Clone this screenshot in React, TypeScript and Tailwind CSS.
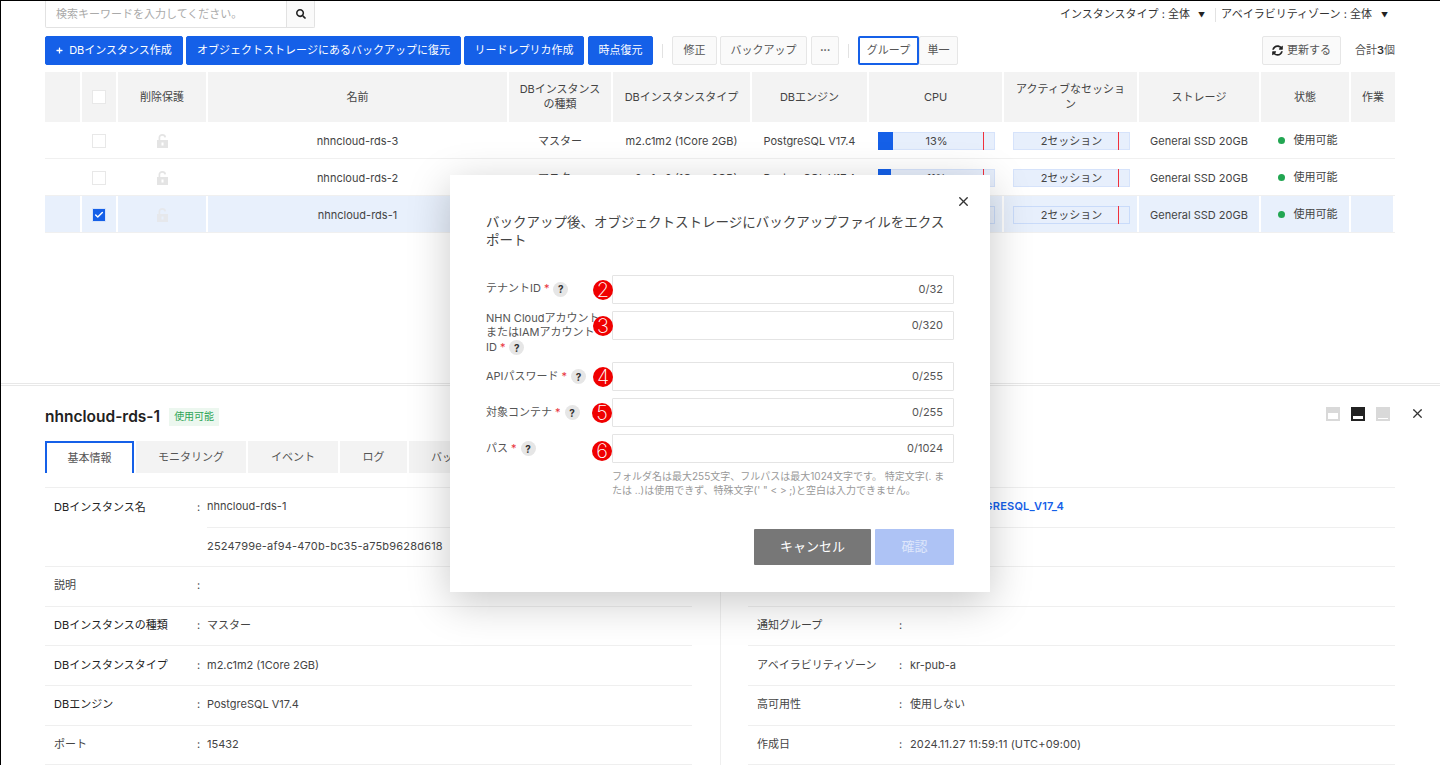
import React from 'react';
import { FaPlus, FaSearch, FaSyncAlt } from 'react-icons/fa';
import { X, Check } from 'lucide-react';

const columns = ['w-[37px]', 'w-[36px]', 'w-[90px]', 'w-[301px]', 'w-[104px]', 'w-[139px]', 'w-[117px]', 'w-[135px]', 'w-[135px]', 'w-[122px]', 'w-[90px]', 'w-[44px]'];

const headers = ['', '', '削除保護', '名前', 'DBインスタンスの種類', 'DBインスタンスタイプ', 'DBエンジン', 'CPU', 'アクティブなセッション', 'ストレージ', '状態', '作業'];

const rows = [
  { name: 'nhncloud-rds-3', cpu: 13, selected: false },
  { name: 'nhncloud-rds-2', cpu: 11, selected: false },
  { name: 'nhncloud-rds-1', cpu: 9, selected: true },
];

const LockIcon = ({ light }: { light: boolean }) => (
  <svg width="11" height="14" viewBox="0 0 11 14" className={light ? 'text-[#e6e8ec]' : 'text-[#e4e4e4]'}>
    <path d="M2.4 6.5V3.4C2.4 1.8 3.6.9 5.2.9s2.9.9 3 2.5" fill="none" stroke="currentColor" strokeWidth="1.7" />
    <path d="M0 6h11v8H0z" fill="currentColor" />
    <rect x="4.5" y="8.5" width="2" height="3" fill={light ? '#e8f0fc' : '#fff'} />
  </svg>
);

const Checkbox = ({ checked }: { checked: boolean }) =>
  checked ? (
    <span className="flex h-[14px] w-[14px] items-center justify-center border border-[#d5e3fa] bg-[#1560e8] text-white">
      <Check size={10} strokeWidth={3.5} />
    </span>
  ) : (
    <span className="block h-[14px] w-[14px] border-[1.5px] border-[#e8e8e8] bg-white" />
  );

const Meter = ({ label, percent, selected }: { label: string; percent: number; selected: boolean }) => (
  <div className={`relative h-[18px] w-[117px] translate-x-px border bg-[#e7effc] text-center text-[11px] leading-[16px] text-[#444] ${selected ? 'border-[#c9dbfa]' : 'border-[#d6e3fb]'}`}>
    {percent > 0 && <div className="absolute -left-px -top-px h-[18px] bg-[#1560e8]" style={{ width: `${percent}%` }} />}
    <span className="relative">{label}</span>
    <div className="absolute -top-px left-[104px] h-[18px] w-px bg-[#f0313c]" />
  </div>
);

const Row = ({ name, cpu, selected }: { name: string; cpu: number; selected: boolean }) => {
  const cell = 'flex items-center justify-center border-r-2 border-transparent';
  const values = [
    <Checkbox checked={selected} />,
    <LockIcon light={selected} />,
    name,
    'マスター',
    'm2.c1m2 (1Core 2GB)',
    'PostgreSQL V17.4',
    <Meter label={`${cpu}%`} percent={cpu} selected={selected} />,
    <Meter label="2セッション" percent={0} selected={selected} />,
    'General SSD 20GB',
    <span className="ml-[5px] flex -translate-y-px items-center">
      <span className="mr-[9px] h-[7px] w-[7px] rounded-full bg-[#22a652]" />
      使用可能
    </span>,
    '',
  ];
  return (
    <div className={`flex h-[37px] border-b border-[#f0f0f0] text-[11px] text-[#444] ${selected ? 'bg-[#e8f0fc]' : ''}`}>
      <div className={`${columns[0]} ${selected ? 'border-r-2 border-white' : ''}`} />
      {values.map((v, i) => (
        <div key={i} className={`${columns[i + 1]} ${cell} pt-[2px] ${selected ? 'border-white' : ''}`}>
          {v}
        </div>
      ))}
    </div>
  );
};

const ToolButton = ({ children, primary, className = '' }: { children: React.ReactNode; primary?: boolean; className?: string }) => (
  <button
    className={`flex h-[29px] items-center justify-center rounded-[2px] border text-[11px] ${primary ? 'border-[#1560e8] bg-[#1560e8] text-white' : 'border-[#e6e6e6] bg-[#fafafa] text-[#555]'} ${className}`}
  >
    {children}
  </button>
);

const TopSection = () => (
  <div className="h-[382px] pl-[44px] pr-[45px]">
    <div className="flex h-[27px] items-start justify-between">
      <div className="flex h-[27px] w-[270px] rounded-b-[2px] border border-t-0 border-[#e2e2e2] bg-white">
        <div className="flex flex-1 items-center pl-[10px] text-[11px] text-[#aaa]">検索キーワードを入力してください。</div>
        <div className="flex w-[28px] items-center justify-center border-l border-[#e2e2e2] bg-[#fafafa] text-[#222]">
          <FaSearch size={10} />
        </div>
      </div>
      <div className="flex h-[27px] items-center text-[11px] text-[#333]">
        <span>インスタンスタイプ : 全体</span>
        <span className="ml-[8px] translate-y-[2px] text-[7px] text-[#222]">▼</span>
        <span className="ml-[10px] mr-[5px] h-[14px] w-px bg-[#e2e2e2]" />
        <span>アベイラビリティゾーン : 全体</span>
        <span className="ml-[9px] mr-[7px] translate-y-[2px] text-[7px] text-[#222]">▼</span>
      </div>
    </div>
    <div className="mt-[8px] flex h-[29px] items-center">
      <ToolButton primary className="w-[138px]">
        <FaPlus size={7} className="mr-[6px]" />
        DBインスタンス作成
      </ToolButton>
      <ToolButton primary className="ml-[3px] w-[275px]">オブジェクトストレージにあるバックアップに復元</ToolButton>
      <ToolButton primary className="ml-[3px] w-[120px]">リードレプリカ作成</ToolButton>
      <ToolButton primary className="ml-[4px] w-[65px]">時点復元</ToolButton>
      <span className="mx-[9px] h-[14px] w-px bg-[#e2e2e2]" />
      <ToolButton className="w-[45px]">修正</ToolButton>
      <ToolButton className="ml-[3px] w-[87px]">バックアップ</ToolButton>
      <ToolButton className="ml-[4px] w-[28px] font-bold tracking-tight">···</ToolButton>
      <span className="mx-[9px] h-[14px] w-px bg-[#e2e2e2]" />
      <ToolButton className="w-[61px] !border-2 !border-[#1560e8] !bg-white">グループ</ToolButton>
      <ToolButton className="w-[39px]">単一</ToolButton>
      <div className="ml-auto flex items-center">
        <ToolButton className="w-[79px]">
          <FaSyncAlt size={11} className="mr-[4px] text-[#222]" />
          更新する
        </ToolButton>
        <span className="ml-[14px] text-[11px] text-[#555]">
          合計<b className="font-semibold text-[#333]">3</b>個
        </span>
      </div>
    </div>
    <div className="mt-[7px] flex h-[50px] bg-[#f3f3f3] text-center text-[11px] leading-[15px] text-[#444]">
      {headers.map((h, i) => (
        <div key={i} className={`${columns[i]} flex items-center justify-center border-r-2 border-white px-[9px] last:border-r-0`}>
          {i === 1 ? <Checkbox checked={false} /> : h}
        </div>
      ))}
    </div>
    {rows.map((r) => (
      <Row key={r.name} {...r} />
    ))}
  </div>
);

const DetailRow = ({ label, value, strong, link, right, wide }: { label: string; value?: string; strong?: boolean; link?: boolean; right?: boolean; wide?: boolean }) => (
  <div className="flex h-[39.6px] items-center border-b border-[#efefef] pb-[1.5px] text-[11px] text-[#444]">
    <div className={`${right ? 'w-[151px]' : 'w-[152px]'} pl-[9px] ${strong ? 'text-[#222]' : 'text-[#444]'}`}>{label}</div>
    <div className={right ? 'w-[11px]' : 'w-[10px]'}>:</div>
    <div className={`${link ? 'font-semibold tracking-[0.2px] text-[#1560e8]' : ''} ${wide ? 'tracking-[0.13px]' : ''}`}>{value}</div>
  </div>
);

const tabs = [
  { label: '基本情報', w: 'w-[89px]' },
  { label: 'モニタリング', w: 'w-[110px]' },
  { label: 'イベント', w: 'w-[90px]' },
  { label: 'ログ', w: 'w-[67px]' },
  { label: 'バックアップ', w: 'w-[110px]' },
];

const DetailPanel = () => (
  <div className="border-t border-[#e8e8e8]">
    <div className="mt-px border-t border-[#e8e8e8] pl-[44px] pr-[45px]">
      <div className="flex h-[55px] items-center justify-between pt-[6px]">
        <div className="flex items-center">
          <span className="text-[15.5px] font-semibold text-[#222]">nhncloud-rds-1</span>
          <span className="ml-[9px] bg-[#ecf7ef] px-[5px] py-[1.5px] text-[10px] text-[#2fa557]">使用可能</span>
        </div>
        <div className="-mr-[30px] flex -translate-y-[3px] items-center">
          <span className="flex h-[14px] w-[14px] items-end bg-[#d9d9d9] p-[2px]">
            <span className="block h-[6px] w-full bg-white" />
          </span>
          <span className="ml-[11px] flex h-[14px] w-[14px] items-end bg-[#222] p-[2px]">
            <span className="block h-[3px] w-full bg-white" />
          </span>
          <span className="ml-[11px] flex h-[14px] w-[14px] items-end bg-[#d9d9d9] p-[2px]">
            <span className="block h-px w-full bg-white" />
          </span>
          <X size={15} strokeWidth={2} className="ml-[20px] text-[#333]" />
        </div>
      </div>
      <div className="flex h-[32px] gap-[2px] text-[11px] text-[#555]">
        {tabs.map((t, i) => (
          <div
            key={t.label}
            className={`flex items-center justify-center ${t.w} ${i === 0 ? 'border-x-2 border-t-2 border-[#1560e8] bg-white' : 'bg-[#f3f3f3]'}`}
          >
            {t.label}
          </div>
        ))}
      </div>
      <div className="mt-[14px] flex">
        <div className="w-[647px] border-t border-[#efefef]">
          <div className="flex h-[79.2px] border-b border-[#efefef] text-[11px] text-[#444]">
            <div className="flex h-[39.6px] w-[152px] items-center pb-[1.5px] pl-[9px] text-[#222]">DBインスタンス名</div>
            <div className="flex h-[39.6px] w-[10px] items-center pb-[1.5px]">:</div>
            <div className="flex-1">
              <div className="flex h-[39.6px] items-center border-b border-[#efefef] pb-[1.5px]">nhncloud-rds-1</div>
              <div className="flex h-[39.6px] items-center pb-[1.5px] tracking-[0.2px]">2524799e-af94-470b-bc35-a75b9628d618</div>
            </div>
          </div>
          <DetailRow label="説明" />
          <DetailRow label="DBインスタンスの種類" value="マスター" strong />
          <DetailRow label="DBインスタンスタイプ" value="m2.c1m2 (1Core 2GB)" strong />
          <DetailRow label="DBエンジン" value="PostgreSQL V17.4" strong />
          <DetailRow label="ポート" value="15432" />
        </div>
        <div className="ml-[28px] mr-[27px] w-px bg-[#efefef]" />
        <div className="w-[647px] border-t border-[#efefef]">
          <DetailRow right label="パラメータグループ" value="default-POSTGRESQL_V17_4" link />
          <DetailRow right label="DBセキュリティグループ" />
          <DetailRow right label="バックアップ" />
          <DetailRow right label="通知グループ" />
          <DetailRow right label="アベイラビリティゾーン" value="kr-pub-a" />
          <DetailRow right label="高可用性" value="使用しない" />
          <DetailRow right label="作成日" value="2024.11.27 11:59:11 (UTC+09:00)" wide />
        </div>
      </div>
    </div>
  </div>
);

const Help = () => (
  <span className="ml-[4px] inline-flex h-[15px] w-[15px] items-center justify-center rounded-full bg-[#e6e6e6] align-middle text-[10px] font-bold leading-none text-[#333]">?</span>
);

const Required = () => <span className="ml-[3px] text-[#e8323c]">*</span>;

const Field = ({ n, count, top, badge = 'left-[107px] top-[5px]', children }: { n: number; count: string; top?: boolean; badge?: string; children: React.ReactNode }) => (
  <div className={`relative flex ${top ? 'items-start' : 'items-center'}`}>
    <div className="w-[126px] text-[11px] leading-[14.5px] text-[#555]">{children}</div>
    <div className="flex h-[29px] w-[342px] items-center justify-end rounded-[1px] border border-[#e4e4e4] bg-white pr-[10px] text-[11px] text-[#555]">{count}</div>
    <span className={`absolute ${badge} flex h-[20px] w-[20px] items-center justify-center rounded-full bg-[#f00000] font-['Inter',sans-serif] text-[20px] font-extralight leading-none text-white`}>{n}</span>
  </div>
);

const Modal = () => (
  <div className="absolute left-[449px] top-[174px] h-[417px] w-[540px] bg-white px-[36px] pt-[38px] shadow-[0_10px_40px_rgba(0,0,0,0.22)]">
    <X size={15} strokeWidth={2.2} className="absolute right-[19px] top-[19px] text-[#333]" />
    <h2 className="w-[468px] text-[13.5px] font-normal leading-[18px] text-[#444]">バックアップ後、オブジェクトストレージにバックアップファイルをエクスポート</h2>
    <div className="mt-[25.5px] flex flex-col gap-[7px]">
      <Field n={2} count="0/32">
        テナントID<Required /><Help />
      </Field>
      <Field n={3} count="0/320" top>
        NHN Cloudアカウント
        <br />
        またはIAMアカウント
        <br />
        ID<Required /><Help />
      </Field>
      <Field n={4} count="0/255">
        APIパスワード<Required /><Help />
      </Field>
      <Field n={5} count="0/255" badge="left-[106px] top-[5px]">
        対象コンテナ<Required /><Help />
      </Field>
      <Field n={6} count="0/1024" badge="left-[106px] top-[6.5px]">
        パス<Required /><Help />
      </Field>
    </div>
    <p className="ml-[126px] mt-[5.5px] w-[342px] text-[10px] leading-[14px] text-[#999]">
      フォルダ名は最大255文字、フルパスは最大1024文字です。 特定文字(. または ..)は使用できず、特殊文字(' " &lt; &gt; ;)と空白は入力できません。
    </p>
    <div className="mt-[32px] flex justify-end gap-[4px]">
      <button className="h-[36px] w-[117px] rounded-[1px] bg-[#777] text-[13px] text-white">キャンセル</button>
      <button className="h-[36px] w-[79px] rounded-[1px] bg-[#aec3f5] text-[13px] text-[#dfe7fb]">確認</button>
    </div>
  </div>
);

export default function App() {
  return (
    <div className="relative h-[765px] w-[1440px] overflow-hidden border-l border-t border-black bg-white font-['Inter','Noto_Sans_CJK_JP',sans-serif]">
      <TopSection />
      <DetailPanel />
      <Modal />
    </div>
  );
}
